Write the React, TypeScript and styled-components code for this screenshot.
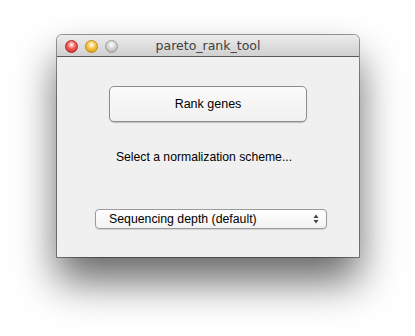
import React from 'react';
import styled, { createGlobalStyle } from 'styled-components';

const Global = createGlobalStyle`
  html, body {
    margin: 0;
    padding: 0;
    background: #ffffff;
    font-family: "Liberation Sans", Arial, sans-serif;
  }
`;

const Desk = styled.div`
  width: 415px;
  height: 336px;
  padding: 35px 0 0 57px;
  box-sizing: border-box;
  overflow: hidden;
`;

const Window = styled.div`
  width: 302px;
  height: 222px;
  display: flex;
  flex-direction: column;
  border-radius: 5px 5px 0 0;
  background: #f0f0f0;
  box-shadow: 0 0 0 1px rgba(0, 0, 0, 0.4), 0 24px 42px rgba(0, 0, 0, 0.6);
  overflow: hidden;
`;

const TitleBar = styled.div`
  height: 21px;
  position: relative;
  display: flex;
  align-items: center;
  justify-content: center;
  background: linear-gradient(#ececec, #d0d0d0);
  border-bottom: 1px solid #5a5a5a;
`;

const Lights = styled.div`
  position: absolute;
  left: 8px;
  top: 5px;
  display: flex;
  gap: 7px;
`;

const Light = styled.span<{ $c: string; $d: string }>`
  width: 13px;
  height: 13px;
  border-radius: 50%;
  box-sizing: border-box;
  border: 1px solid ${p => p.$d};
  background: radial-gradient(circle at 50% 35%, #ffffff 0%, ${p => p.$c} 45%, ${p => p.$d} 100%);
`;

const Title = styled.div`
  font-family: "DejaVu Sans", sans-serif;
  font-size: 12.5px;
  color: #404040;
`;

const Content = styled.div`
  flex: 1;
  display: flex;
  flex-direction: column;
  align-items: center;
`;

const PushButton = styled.div`
  margin-top: 29px;
  width: 198px;
  height: 36px;
  box-sizing: border-box;
  border: 1px solid #8e8e8e;
  border-radius: 5px;
  background: linear-gradient(#fbfbfb, #f0f0f0);
  box-shadow: 0 1px 1px rgba(0, 0, 0, 0.2);
  display: flex;
  align-items: center;
  justify-content: center;
  font-size: 12.5px;
  color: #000;
`;

const Label = styled.div`
  margin-top: 28px;
  margin-right: 8px;
  font-size: 12.2px;
  color: #000;
`;

const Popup = styled.div`
  margin-top: 45px;
  margin-left: 6px;
  width: 232px;
  height: 20px;
  box-sizing: border-box;
  border: 1px solid #9a9a9a;
  border-radius: 4px;
  background: linear-gradient(#ffffff, #f2f2f2);
  box-shadow: 0 1px 1px rgba(0, 0, 0, 0.12);
  display: flex;
  align-items: center;
  justify-content: space-between;
  padding: 0 7px 0 13px;
  font-size: 12.3px;
  color: #000;
`;

const Arrows = () => (
  <svg width="6" height="10" viewBox="0 0 6 10">
    <path d="M3 0.5L5.5 4H0.5Z" fill="#444" />
    <path d="M3 9.5L5.5 6H0.5Z" fill="#444" />
  </svg>
);

export default function App() {
  return (
    <Desk>
      <Global />
      <Window>
        <TitleBar>
          <Lights>
            <Light $c="#f25a55" $d="#b3261e" />
            <Light $c="#f7c442" $d="#c28b14" />
            <Light $c="#d6d6d6" $d="#9c9c9c" />
          </Lights>
          <Title>pareto_rank_tool</Title>
        </TitleBar>
        <Content>
          <PushButton>Rank genes</PushButton>
          <Label>Select a normalization scheme...</Label>
          <Popup>
            <span>Sequencing depth (default)</span>
            <Arrows />
          </Popup>
        </Content>
      </Window>
    </Desk>
  );
}
